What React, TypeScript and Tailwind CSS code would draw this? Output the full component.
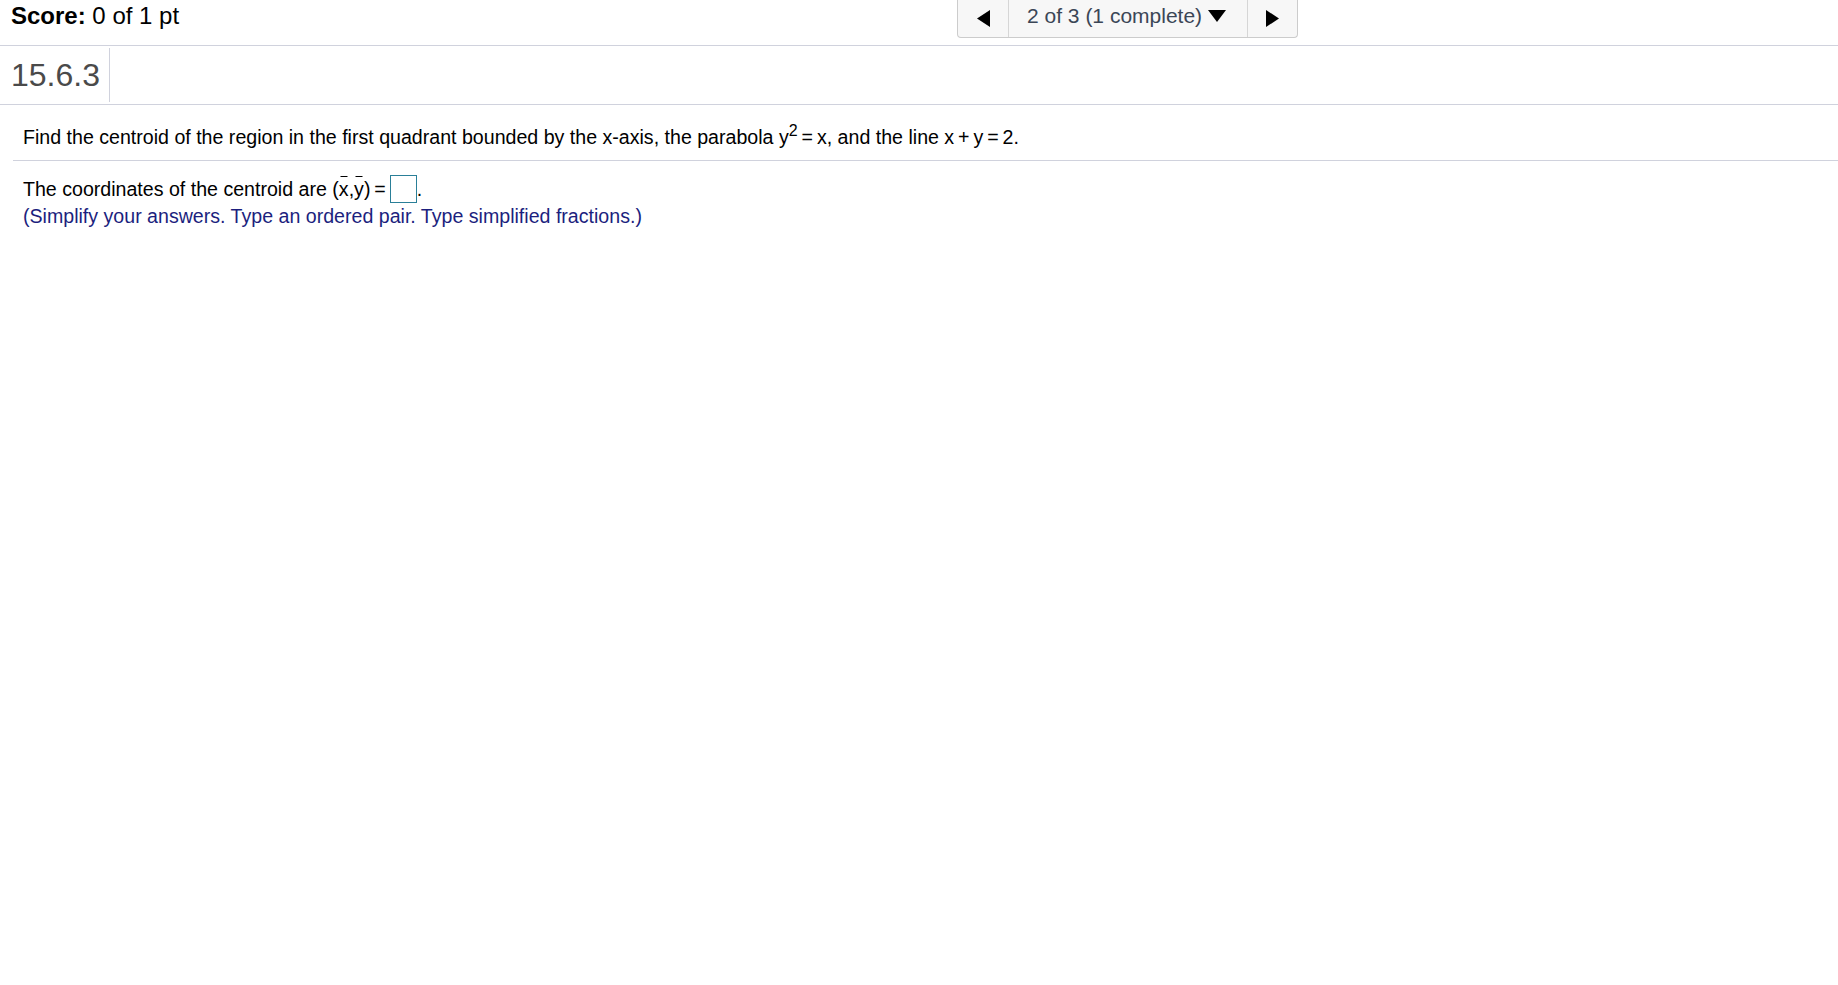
import React from "react";

// ── Small helpers ──────────────────────────────────────────────────────────────
function Bar({ children }: { children: React.ReactNode }) {
  // letter with a short bar above it (x̄, ȳ)
  return (
    <span className="relative inline-block">
      <span className="absolute left-1/2 top-[-2px] h-px w-[7px] -translate-x-1/2 bg-black" />
      {children}
    </span>
  );
}

function Triangle({ dir }: { dir: "left" | "right" | "down" }) {
  if (dir === "down") {
    return (
      <svg width="18" height="12" viewBox="0 0 18 12" className="inline-block">
        <path d="M0 0 L18 0 L9 12 Z" fill="#000" />
      </svg>
    );
  }
  return (
    <svg width="13" height="17" viewBox="0 0 13 17">
      {dir === "left" ? <path d="M13 0 L13 17 L0 8.5 Z" fill="#000" /> : <path d="M0 0 L0 17 L13 8.5 Z" fill="#000" />}
    </svg>
  );
}

// ═══════════════════════════════════════════════════════════════════════════════
// Question page
// ═══════════════════════════════════════════════════════════════════════════════
export default function App() {
  return (
    <main className="min-h-screen w-full bg-white text-black" style={{ fontFamily: '"Liberation Sans", Arial, sans-serif' }}>
      {/* ── Score bar + navigation ───────────────────────────────────── */}
      <header className="flex h-[46px] items-start border-b border-[#d0d2dd]">
        <div className="w-[957px] shrink-0 pl-[11px] pt-[2px] text-[24px] leading-[28px]">
          <span className="font-bold">Score:</span> 0 of 1 pt
        </div>
        <nav className="flex h-[38px] w-[341px] items-stretch rounded-b-[4px] border border-t-0 border-[#cccccc] bg-[#f7f7f7]">
          <button className="flex w-[51px] items-center justify-center border-r border-[#d6d6d6]">
            <Triangle dir="left" />
          </button>
          <div className="flex flex-1 items-center gap-[6px] pb-[5px] pl-[18px] text-[21px] text-[#3b4656]">
            <span>2 of 3 (1 complete)</span>
            <Triangle dir="down" />
          </div>
          <button className="flex w-[50px] items-center justify-center border-l border-[#d6d6d6]">
            <Triangle dir="right" />
          </button>
        </nav>
      </header>

      {/* ── Question id ─────────────────────────────────────────────── */}
      <section className="flex h-[59px] border-b border-[#d0d2dd]">
        <div className="my-[2px] flex items-center border-r border-[#d0d2dd] pl-[11px] pr-[9px] text-[32px] text-[#4a4a4a]">15.6.3</div>
      </section>

      {/* ── Question body ───────────────────────────────────────────── */}
      <section className="pl-[13px] pt-[21px] text-[19.6px] leading-[22px]">
        <p className="border-b border-[#d0d2dd] pb-[12px] pl-[10px]">
          Find the centroid of the region in the first quadrant bounded by the x-axis, the parabola y
          <sup className="text-[16px]">2</sup>{"\u2009=\u2009x, and the line x\u2009+\u2009y\u2009=\u20092."}
        </p>
        <div className="pl-[10px] pt-[14px]">
          <p className="flex items-center">
            <span>
              The coordinates of the centroid are (<Bar>x</Bar>,<Bar>y</Bar>){"\u2009="}
            </span>
            <span className="ml-[4px] inline-block h-[28px] w-[27px] border border-[#2a7f98]" />
            <span>.</span>
          </p>
          <p className="pt-[2px] text-[#1c1f7e]">(Simplify your answers. Type an ordered pair. Type simplified fractions.)</p>
        </div>
      </section>
    </main>
  );
}
